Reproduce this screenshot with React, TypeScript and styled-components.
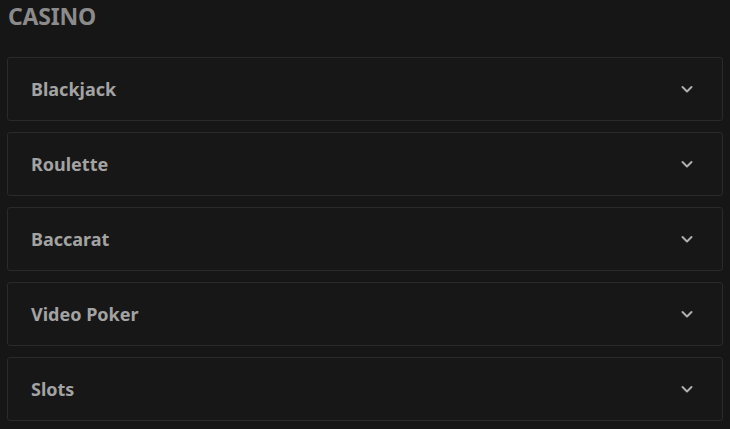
import styled, { createGlobalStyle } from 'styled-components';

const GlobalStyle = createGlobalStyle`
  body {
    margin: 0;
    background: #161616;
    font-family: 'Noto Sans', 'Liberation Sans', sans-serif;
  }
`;

const Page = styled.div`
  padding: 0 7px;
`;

const Title = styled.h2`
  margin: 0 0 25px 1px;
  font-size: 23px;
  line-height: 32px;
  font-weight: 700;
  letter-spacing: -0.2px;
  color: #8b8b8b;
`;

const List = styled.div`
  display: flex;
  flex-direction: column;
  gap: 11px;
`;

const Item = styled.button`
  display: flex;
  align-items: center;
  justify-content: space-between;
  height: 64px;
  width: 716px;
  padding: 0 28px 0 23px;
  box-sizing: border-box;
  background: #171717;
  border: 1px solid #2a2a2a;
  border-radius: 3px;
  cursor: pointer;
`;

const Name = styled.span`
  font-family: 'Noto Sans', 'Liberation Sans', sans-serif;
  font-size: 18px;
  font-weight: 700;
  color: #a3a3a3;
`;

const Chevron = () => (
  <svg width="14" height="14" viewBox="0 0 14 14" fill="none">
    <path d="M2.5 5 L7 9.5 L11.5 5" stroke="#b0b0b0" strokeWidth="2" strokeLinecap="round" strokeLinejoin="round" />
  </svg>
);

const games = ['Blackjack', 'Roulette', 'Baccarat', 'Video Poker', 'Slots'];

function App(): JSX.Element {
  return (
    <Page>
      <GlobalStyle />
      <Title>CASINO</Title>
      <List>
        {games.map((g) => (
          <Item key={g}>
            <Name>{g}</Name>
            <Chevron />
          </Item>
        ))}
      </List>
    </Page>
  );
}

export default App;
